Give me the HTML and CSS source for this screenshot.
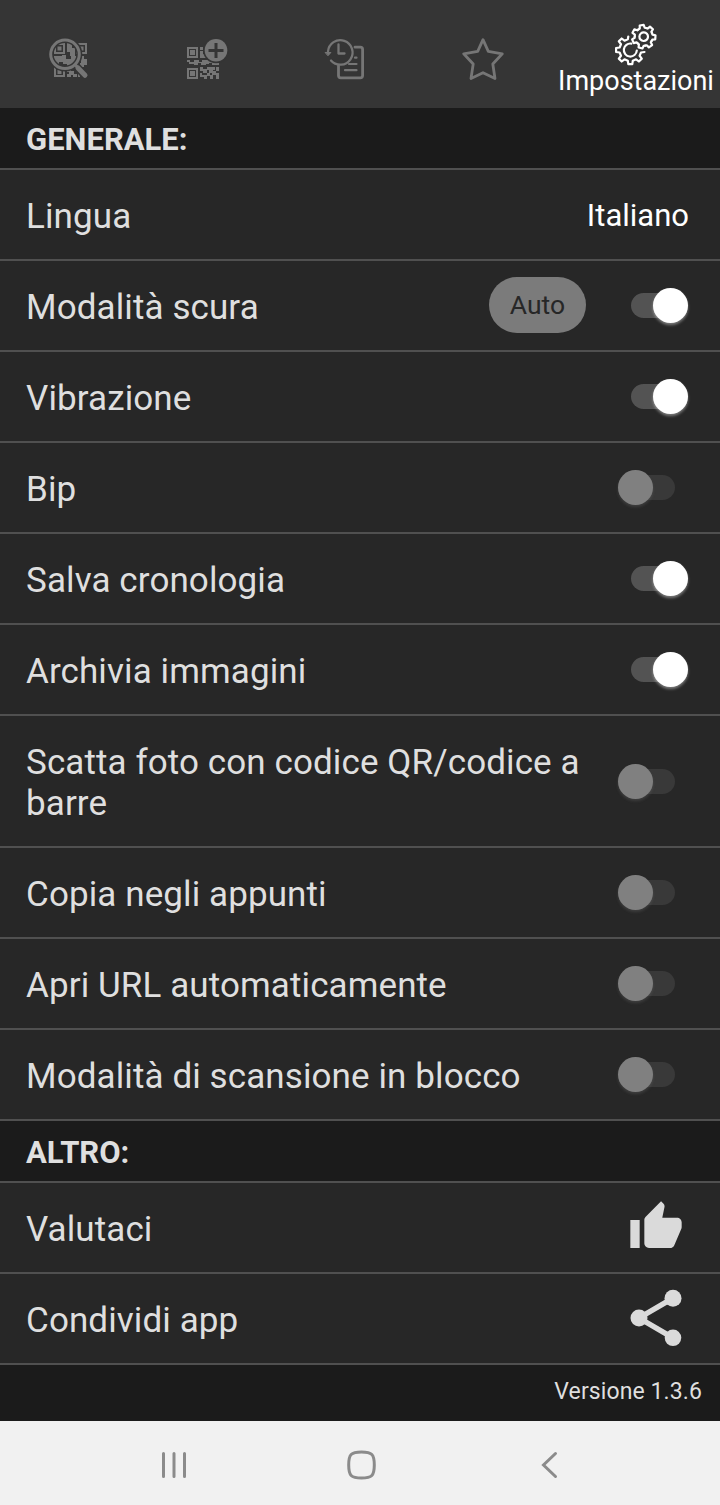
FILE: index.html
```html
<!DOCTYPE html>
<html lang="it">
<head>
  <meta charset="UTF-8" />
  <meta name="viewport" content="width=device-width, initial-scale=1.0"/>
  <title>Impostazioni</title>
  <link rel="stylesheet" href="styles.css">
</head>
<body>
  <nav class="tabs">
    <div class="tab">
      <svg class="tab-icon" viewBox="0 0 44 44">
        <path fill="currentColor" fill-rule="evenodd" d="M7 6h11v11h-11zM9 8v7h7v-7zM29 6h11v11h-11zM31 8v7h7v-7zM7 29h11v11h-11zM9 31v7h7v-7z"/>
        <path fill="currentColor" d="M10.500 9.500h4v4h-4zM33 9.500h3.500v4h-3.500zM10.500 33h4v4h-4zM20 6h5v5h3v8h-5v-4h-3zM7 19h8v-1h4v4h5v-3h5v9h-4v2h-5v-3h-4v-2h-4v3h-5zM34 19h3v3h3v6h-3v2h-4v-4h1zM20 32h4v2h3v3h3v3h-4v-2h-2v2h-4v-3h2v-2h-2zM31 35h2v5h-2z"/>
        <path stroke="#353535" stroke-width="8" d="M28.500 28.500L38 38.500"/>
        <circle cx="18" cy="17.300" r="14.300" fill="none" stroke="#353535" stroke-width="6"/>
        <path stroke="currentColor" stroke-width="5" stroke-linecap="round" d="M31 31L38 38.300"/>
        <path stroke="currentColor" stroke-width="3" d="M28 27.500L31 31"/>
        <circle cx="18" cy="17.300" r="14.300" fill="none" stroke="currentColor" stroke-width="3"/>
      </svg>
    </div>
    <div class="tab">
      <svg class="tab-icon" viewBox="0 0 44 44">
        <path fill="currentColor" fill-rule="evenodd" d="M2 10h11v11h-11zM4 12v7h7v-7zM2 31h11v11h-11zM4 33v7h7v-7z"/>
        <path fill="currentColor" d="M5 13h5v5h-5zM5 34h5v5h-5zM15 10h3v3h-3zM15 14h3v3h3v4h-6zM2 23h3v2h-3zM4 25h5v-2h5v2h3v-2h7v4h-3v1h-5v-2h-3v2h-4v-1h-5zM24 23h5v3h5v2h-7v-2h-3zM15 30h3v2h4v-2h3v3h-3v3h-4v-2h-3zM25 30h5v3h-2v3h-4v-3h1zM31 30h3v4h-3zM15 36h2v2h5v-2h3v3h-3v3h-3v-2h-4zM27 34h4v2h3v4h-3v-2h-3v4h-3v-4h2zM31 40h3v2h-3z"/>
        <circle cx="31" cy="13.300" r="13" fill="#353535"/>
        <circle cx="31" cy="13.300" r="11.300" fill="currentColor"/>
        <path stroke="#353535" stroke-width="3" d="M23.500 13.500h15M31 6v15"/>
      </svg>
    </div>
    <div class="tab">
      <svg class="tab-icon line" viewBox="0 0 44 44">
        <path d="M5 14.500A12.300 12.300 0 1 1 8 23.500" stroke-width="2.300"/>
        <path d="M2.500 15.500h5.400l-2.700 3z" fill="currentColor" stroke-width="1"/>
        <path d="M15.500 7.500v9h6" stroke-width="2.300"/>
        <path d="M32 10.200h5.300q2.300 0 2.300 2.300v26q0 2.300-2.300 2.300h-19.500q-2.300 0-2.300-2.300v-10" stroke-width="2.800"/>
        <path d="M32 20.700h1.500M26 27h7.500M22 33.200h11.500" stroke-width="2.200"/>
      </svg>
    </div>
    <div class="tab">
      <svg class="tab-icon line" viewBox="0 0 44 44">
        <path stroke-width="2.800" d="M22 2.700L27.300 14.300L41.300 16.800L31.800 27L34 41.500L22 35.700L10 41.500L12.200 27L2.700 16.800L16.700 14.300z"/>
      </svg>
    </div>
    <div class="tab active">
      <svg class="tab-icon line" viewBox="0 0 44 44">
        <defs>
          <path id="tooth" d="M8.100 -3.900L8.700 -2.500L11.700 -2L11.700 2L8.700 2.500L8.100 3.900"/>
        </defs>
        <g transform="translate(16.300 27)" stroke-width="2.200">
          <path d="M14.200 2L10.700 2.500L9.300 5.800L11.500 8.600L8.600 11.500L5.800 9.300L2.500 10.700L2 14.200L-2 14.200L-2.500 10.700L-5.800 9.300L-8.600 11.500L-11.500 8.600L-9.300 5.800L-10.700 2.500L-14.200 2L-14.200 -2L-10.700 -2.500L-9.300 -5.800L-11.500 -8.600L-8.600 -11.500L-5.800 -9.300L-2.500 -10.700L-2 -13.500"/>
          <path d="M6.500 .5A6.500 6.500 0 1 1 1 -6.400"/>
        </g>
        <g transform="translate(29.700 13.700) rotate(3)" stroke-width="2.200">
          <use href="#tooth"/>
          <use href="#tooth" transform="rotate(51.430)"/>
          <use href="#tooth" transform="rotate(102.860)"/>
          <use href="#tooth" transform="rotate(154.290)"/>
          <use href="#tooth" transform="rotate(205.710)"/>
          <use href="#tooth" transform="rotate(257.140)"/>
          <use href="#tooth" transform="rotate(308.570)"/>
          <circle r="4.300"/>
        </g>
      </svg>
      <span class="tab-label">Impostazioni</span>
    </div>
  </nav>

  <main class="settings">
    <h2 class="section">GENERALE:</h2>
    <div class="row">
      <span class="label">Lingua</span>
      <span class="value">Italiano</span>
    </div>
    <div class="row">
      <span class="label">Modalità scura</span>
      <span class="auto">Auto</span>
      <span class="switch on"></span>
    </div>
    <div class="row">
      <span class="label">Vibrazione</span>
      <span class="switch on"></span>
    </div>
    <div class="row">
      <span class="label">Bip</span>
      <span class="switch"></span>
    </div>
    <div class="row">
      <span class="label">Salva cronologia</span>
      <span class="switch on"></span>
    </div>
    <div class="row">
      <span class="label">Archivia immagini</span>
      <span class="switch on"></span>
    </div>
    <div class="row tall">
      <span class="label">Scatta foto con codice QR/codice a barre</span>
      <span class="switch"></span>
    </div>
    <div class="row">
      <span class="label">Copia negli appunti</span>
      <span class="switch"></span>
    </div>
    <div class="row">
      <span class="label">Apri URL automaticamente</span>
      <span class="switch"></span>
    </div>
    <div class="row">
      <span class="label">Modalità di scansione in blocco</span>
      <span class="switch"></span>
    </div>

    <h2 class="section">ALTRO:</h2>
    <div class="row">
      <span class="label">Valutaci</span>
      <svg class="like" viewBox="0 0 24 24"><path d="M1 21h4V9H1v12zm22-11c0-1.100-.9-2-2-2h-6.310l.95-4.570.03-.32c0-.41-.17-.79-.44-1.060L14.170 1 7.590 7.590C7.220 7.950 7 8.450 7 9v10c0 1.100.9 2 2 2h9c.83 0 1.540-.5 1.840-1.220l3.020-7.050c.09-.23.14-.47.14-.73v-2z"/></svg>
    </div>
    <div class="row">
      <span class="label">Condividi app</span>
      <svg class="share" viewBox="0 0 24 24">
        <path d="M18 5L6 12L18 19"/>
        <circle cx="18" cy="5" r="3"/>
        <circle cx="6" cy="12" r="3"/>
        <circle cx="18" cy="19" r="2.920"/>
      </svg>
    </div>
    <div class="version">Versione 1.3.6</div>
  </main>

  <footer class="navbar">
    <svg class="nav-icon" viewBox="0 0 32 32"><path d="M4.500 4.500v23M15 4.500v23M25.500 4.500v23"/></svg>
    <svg class="nav-icon" viewBox="0 0 32 32"><path d="M15.500 3C26 3 28.300 5.500 28.300 16S26 29 15.500 29S2.700 26.500 2.700 16S5 3 15.500 3z"/></svg>
    <svg class="nav-icon" viewBox="0 0 32 32"><path d="M22.500 4.500L10.500 16L22.500 27.500"/></svg>
  </footer>
</body>
</html>
```
FILE: styles.css
```css
* {
  box-sizing: border-box;
}

body {
  margin: 0;
  height: 1505px;
  display: flex;
  flex-direction: column;
  font-family: Roboto, "Liberation Sans", sans-serif;
  background: #1b1b1b;
  color: #dfdfdf;
}

.tabs {
  height: 108px;
  flex: none;
  display: grid;
  grid-template-columns: repeat(4, 138px) 168px;
  background: #353535;
}

.tab {
  display: flex;
  flex-direction: column;
  align-items: center;
  padding-top: 37px;
  color: #767676;
}

.tab.active {
  padding-top: 23px;
  color: #fff;
}

.tab-icon {
  width: 44px;
  height: 44px;
  flex: none;
}

.line {
  fill: none;
  stroke: currentColor;
  stroke-linecap: round;
  stroke-linejoin: round;
}

.tab-label {
  font-size: 27px;
  line-height: 32px;
  margin-top: -2px;
  white-space: nowrap;
}

.settings {
  flex: 1;
}

.section {
  margin: 0;
  height: 62px;
  padding: 3px 26px 0;
  border-bottom: 2px solid #505050;
  font-size: 31px;
  font-weight: 700;
  line-height: 58px;
}

.row {
  height: 91px;
  display: flex;
  align-items: center;
  padding: 0 31px 0 26px;
  background: #272727;
  border-bottom: 2px solid #505050;
}

.row.tall {
  height: 132px;
}

.label {
  flex: 1;
  padding-top: 3px;
  font-size: 35px;
  letter-spacing: 0.1px;
  line-height: 41px;
}

.value {
  padding-top: 2px;
  font-size: 31px;
  color: #fff;
}

.auto {
  width: 97px;
  height: 56px;
  margin: 0 45px 1px 0;
  border-radius: 28px;
  background: #7b7b7b;
  color: #272727;
  font-size: 26.5px;
  line-height: 56px;
  text-align: center;
}

.switch {
  position: relative;
  width: 44px;
  height: 25px;
  margin-right: 14px;
  border-radius: 13px;
  background: #393939;
}

.switch::after {
  content: "";
  position: absolute;
  top: -5px;
  left: -13px;
  width: 35px;
  height: 35px;
  border-radius: 50%;
  background: #808080;
  box-shadow: 0 2px 3px #80808044;
}

.switch.on {
  background: #535353;
}

.switch.on::after {
  left: 22px;
  background: #fff;
  box-shadow: 0 2px 3px #ffffff66;
}

.like,
.share {
  fill: #dadada;
}

.like {
  width: 56px;
  height: 56px;
  margin: 0 5px 2px 0;
}

.share {
  width: 68px;
  height: 68px;
  margin: 0 -1px 1px 0;
}

.share path {
  fill: none;
  stroke: #dadada;
  stroke-width: 1.9;
}

.version {
  padding: 13px 18px 0 0;
  font-size: 23px;
  letter-spacing: 0.1px;
  line-height: 27px;
  text-align: right;
}

.navbar {
  height: 84px;
  flex: none;
  display: flex;
  align-items: center;
  gap: 155px;
  padding: 3px 0 0 159px;
  background: #f1f1f1;
}

.nav-icon {
  width: 32px;
  height: 32px;
  fill: none;
  stroke: #8b8b8b;
  stroke-width: 3;
  stroke-linecap: round;
}
```
